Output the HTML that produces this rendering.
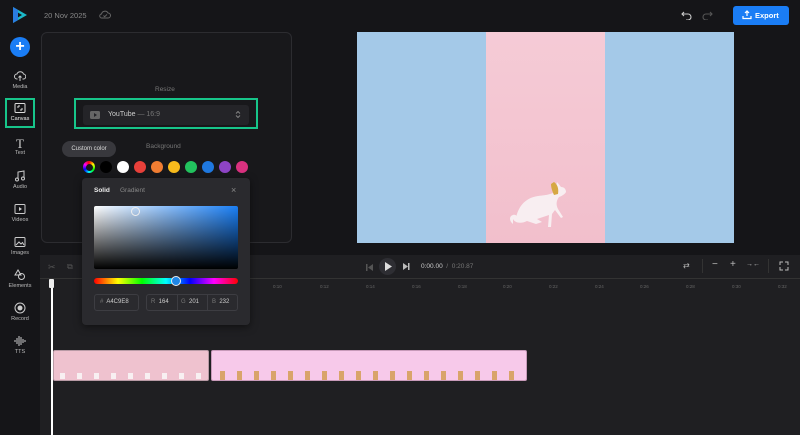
<!DOCTYPE html>
<html><head><meta charset="utf-8"><style>
*{margin:0;padding:0;box-sizing:border-box}
body{width:800px;height:435px;overflow:hidden;background:#151518;font-family:"Liberation Sans",sans-serif;color:#ccc;position:relative}
.a{position:absolute}
.side{left:0;top:0;width:40px;height:435px;background:#151518}
.nav{position:absolute;left:0;width:40px;text-align:center;font-size:5.5px;color:#bbb}
.nav svg{display:block;margin:0 auto 2px}
.sw{position:absolute;top:161px;width:12px;height:12px;border-radius:50%}
.in{position:absolute;top:294px;height:17px;border:1px solid #3d3d42;border-radius:3px;font-size:6px;color:#ccc;line-height:15px}
.tick{position:absolute;top:284px;font-size:4.5px;color:#666}
</style></head><body>
<div class="a side"></div>
<svg class="a" style="left:12px;top:6px" width="16" height="18" viewBox="0 0 16 18"><path d="M1 1 L15 9 L1 17 Z" fill="#1bb9c9"/><path d="M5 6 L10 9 L5 12Z" fill="#151518"/><path d="M1 1 L6 4 L6 14 L1 17Z" fill="#2a7de1"/></svg>
<div class="a" style="left:44px;top:11px;font-size:7.5px;color:#888">20 Nov 2025</div>
<svg class="a" style="left:99px;top:10px" width="12" height="10" viewBox="0 0 12 10"><path d="M3 8h6a2.5 2.5 0 0 0 0-5 3.5 3.5 0 0 0-6.5 1A2 2 0 0 0 3 8z" fill="none" stroke="#666" stroke-width="1"/><path d="M4.5 5.5l1.2 1.2 2.3-2.3" fill="none" stroke="#666" stroke-width="0.9"/></svg>
<svg class="a" style="left:681px;top:10px" width="12" height="10" viewBox="0 0 12 10"><path d="M3 2L1 4l2 2M1 4h6a3 3 0 0 1 0 6H5" fill="none" stroke="#ccc" stroke-width="1.1"/></svg>
<svg class="a" style="left:701px;top:10px" width="12" height="10" viewBox="0 0 12 10"><path d="M9 2l2 2-2 2M11 4H5a3 3 0 0 0 0 6h2" fill="none" stroke="#555" stroke-width="1.1"/></svg>
<div class="a" style="left:733px;top:6px;width:56px;height:19px;background:#1a7df5;border-radius:3px;color:#fff;font-size:7.5px;font-weight:bold;line-height:19px;padding-left:22px">Export</div>
<svg class="a" style="left:742px;top:10px" width="10" height="10" viewBox="0 0 10 10"><path d="M5 1v5M3 3l2-2 2 2M1 6v2.5h8V6" fill="none" stroke="#fff" stroke-width="1.2"/></svg>
<div class="a" style="left:10px;top:37px;width:20px;height:20px;border-radius:50%;background:#1a7df5;color:#fff;font-size:16px;line-height:19px;text-align:center;font-weight:bold">+</div>
<div class="nav" style="top:70px"><svg width="12" height="12" viewBox="0 0 12 12"><path d="M3.5 9H3a2.5 2.5 0 0 1 0-5 3.5 3.5 0 0 1 6.5 0A2.5 2.5 0 0 1 9 9h-.5M6 11V6M4.5 7.5L6 6l1.5 1.5" fill="none" stroke="#ccc" stroke-width="1"/></svg>Media</div>
<div class="a" style="left:5px;top:98px;width:30px;height:30px;border:2.5px solid #17c58a"></div>
<div class="nav" style="top:102px;color:#eee"><svg width="12" height="12" viewBox="0 0 12 12"><rect x="1" y="1.5" width="10" height="9" rx="1" fill="none" stroke="#ddd" stroke-width="1"/><path d="M4 4h2M4 4v2M8 8H6M8 8V6" stroke="#ddd" stroke-width="1"/></svg>Canvas</div>
<div class="nav" style="top:137px"><div style="font-family:'Liberation Serif',serif;font-size:13px;color:#ccc;line-height:13px">T</div>Text</div>
<div class="nav" style="top:170px"><svg width="12" height="12" viewBox="0 0 12 12"><path d="M4 9V2l6-1v7" fill="none" stroke="#ccc" stroke-width="1"/><circle cx="3" cy="9.5" r="1.5" fill="none" stroke="#ccc"/><circle cx="9" cy="8.5" r="1.5" fill="none" stroke="#ccc"/></svg>Audio</div>
<div class="nav" style="top:203px"><svg width="12" height="12" viewBox="0 0 12 12"><rect x="1" y="1.5" width="10" height="9" rx="1" fill="none" stroke="#ccc"/><path d="M5 4v4l3-2z" fill="#ccc"/></svg>Videos</div>
<div class="nav" style="top:236px"><svg width="12" height="12" viewBox="0 0 12 12"><rect x="1" y="1.5" width="10" height="9" rx="1" fill="none" stroke="#ccc"/><path d="M2 9l3-3 2 2 1.5-1.5L10 9" fill="none" stroke="#ccc"/></svg>Images</div>
<div class="nav" style="top:269px"><svg width="12" height="12" viewBox="0 0 12 12"><path d="M4 1L1 6h6z" fill="none" stroke="#ccc"/><circle cx="7.5" cy="7.5" r="3" fill="none" stroke="#ccc"/></svg>Elements</div>
<div class="nav" style="top:302px"><svg width="12" height="12" viewBox="0 0 12 12"><circle cx="6" cy="6" r="5" fill="none" stroke="#ccc"/><circle cx="6" cy="6" r="2.5" fill="#ccc"/></svg>Record</div>
<div class="nav" style="top:335px"><svg width="12" height="12" viewBox="0 0 12 12"><path d="M1 5v2M3 3v6M5 1v10M7 2v8M9 4v4M11 5v2" stroke="#ccc" stroke-width="1"/></svg>TTS</div>
<div class="a" style="left:41px;top:32px;width:251px;height:211px;border:1px solid #2c2c30;border-radius:6px;background:#18181b"></div>
<div class="a" style="left:155px;top:86px;font-size:6.5px;color:#777">Resize</div>
<div class="a" style="left:74px;top:98px;width:184px;height:31px;border:2.5px solid #17c58a"></div>
<div class="a" style="left:83px;top:105px;width:166px;height:20px;background:#242428;border-radius:3px"></div>
<svg class="a" style="left:90px;top:111px" width="10" height="8" viewBox="0 0 10 8"><rect width="10" height="8" rx="1.5" fill="#666"/><path d="M4 2v4l3-2z" fill="#242428"/></svg>
<div class="a" style="left:108px;top:111px;font-size:7px;color:#ccc">YouTube <span style="color:#777">— 16:9</span></div>
<svg class="a" style="left:235px;top:110px" width="6" height="9" viewBox="0 0 6 9"><path d="M1 3.5L3 1.5 5 3.5M1 5.5L3 7.5 5 5.5" fill="none" stroke="#888" stroke-width="0.9"/></svg>
<div class="a" style="left:146px;top:143px;font-size:6.5px;color:#777">Background</div>
<div class="a" style="left:62px;top:141px;width:54px;height:16px;background:#38383d;border-radius:8px;font-size:6px;color:#ddd;text-align:center;line-height:16px">Custom color</div>
<div class="sw" style="left:83px;background:conic-gradient(red,yellow,lime,cyan,blue,magenta,red)"><div style="margin:2.5px;width:7px;height:7px;border-radius:50%;background:#18181b"></div></div>
<div class="sw" style="left:100px;background:#000"></div>
<div class="sw" style="left:117px;background:#fff"></div>
<div class="sw" style="left:134px;background:#e8403a"></div>
<div class="sw" style="left:151px;background:#f07d32"></div>
<div class="sw" style="left:168px;background:#f8bb1c"></div>
<div class="sw" style="left:185px;background:#22c35e"></div>
<div class="sw" style="left:202px;background:#1f78e0"></div>
<div class="sw" style="left:219px;background:#8e44c6"></div>
<div class="sw" style="left:236px;background:#d9317f"></div>
<div class="a" style="left:357px;top:32px;width:377px;height:211px;background:#a4c9e8"></div>
<div class="a" style="left:486px;top:32px;width:119px;height:211px;background:linear-gradient(#f5cbd6,#f2bfcc)"></div>
<svg class="a" style="left:505px;top:164px" width="80" height="72" viewBox="0 0 80 72"><path d="M8 60c-4-3-4-8 0-9 3-1 5 2 3 3 2-10 8-20 22-22 10-1 13-2 17-4l2-10 4 5c3 0 5 2 5 5-1 2-4 4-7 5-3 4-3 8-1 12l5 8-2 1-6-8-3 4-1 13h-3l1-12-12 4 5 3-6 2-9-3c-6 3-12 2-14-2z" fill="#f8eef1"/><path d="M49 18c3 2 5 6 4 12l-4 1c-2-4-3-8-3-11z" fill="#d6a843"/></svg>
<div class="a" style="left:40px;top:255px;width:760px;height:180px;background:#1f1f22"></div>
<div class="a" style="left:40px;top:278px;width:760px;height:1px;background:#333"></div>
<div class="a" style="left:48px;top:262px;font-size:9px;color:#555">✂</div>
<div class="a" style="left:67px;top:262px;font-size:8px;color:#555">⧉</div>
<svg class="a" style="left:366px;top:264px" width="7" height="7"><path d="M7 0v7L2 3.5z M0 0h1.5v7H0z" fill="#555"/></svg>
<div class="a" style="left:379px;top:258px;width:17px;height:17px;border-radius:50%;background:#2e2e33"></div>
<svg class="a" style="left:384px;top:262px" width="8" height="9"><path d="M1 0v9l7-4.5z" fill="#ddd"/></svg>
<svg class="a" style="left:403px;top:263px" width="7" height="7"><path d="M0 0v7l5-3.5z M5 0h1.5v7H5z" fill="#bbb"/></svg>
<div class="a" style="left:421px;top:263px;font-size:6.5px;color:#ccc">0:00.00 <span style="color:#777">&nbsp;/&nbsp; 0:20.87</span></div>
<div class="a" style="left:683px;top:261px;font-size:8px;color:#bbb">⇄</div>
<div class="a" style="left:702px;top:259px;width:1px;height:14px;background:#333"></div>
<div class="a" style="left:712px;top:259px;font-size:10px;color:#bbb">−</div>
<div class="a" style="left:730px;top:259px;font-size:10px;color:#bbb">+</div>
<div class="a" style="left:746px;top:261px;font-size:7px;color:#bbb">→←</div>
<div class="a" style="left:768px;top:259px;width:1px;height:14px;background:#333"></div>
<svg class="a" style="left:779px;top:261px" width="10" height="10"><path d="M1 4V1h3M6 1h3v3M9 6v3H6M4 9H1V6" fill="none" stroke="#bbb"/></svg>
<div class="tick" style="left:273px">0:10</div><div class="tick" style="left:320px">0:12</div><div class="tick" style="left:366px">0:14</div><div class="tick" style="left:412px">0:16</div><div class="tick" style="left:458px">0:18</div><div class="tick" style="left:503px">0:20</div><div class="tick" style="left:549px">0:22</div><div class="tick" style="left:595px">0:24</div><div class="tick" style="left:640px">0:26</div><div class="tick" style="left:686px">0:28</div><div class="tick" style="left:732px">0:30</div><div class="tick" style="left:778px">0:32</div>
<div class="a" style="left:53px;top:350px;width:156px;height:31px;border-radius:2px;border:1px solid #b89aa5;background:#efc2cf repeating-linear-gradient(90deg,transparent 0 6px,#f8f0f2 6px 11px,transparent 11px 17px) 0 22px/17px 6px repeat-x"></div>
<div class="a" style="left:211px;top:350px;width:316px;height:31px;border-radius:2px;border:1px solid #c79ab9;background:#f7c9ea repeating-linear-gradient(90deg,transparent 0 8px,#d9a46a 8px 13px,transparent 13px 17px) 0 20px/17px 9px repeat-x"></div>
<div class="a" style="left:51px;top:285px;width:1.5px;height:150px;background:#fff"></div>
<div class="a" style="left:49px;top:279px;width:5px;height:9px;background:#eee;border-radius:1px"></div>
<div class="a" style="left:82px;top:178px;width:168px;height:147px;background:#2a2a2e;border-radius:4px;box-shadow:0 2px 8px rgba(0,0,0,.5)"></div>
<div class="a" style="left:94px;top:187px;font-size:6.5px;color:#eee;font-weight:bold">Solid</div>
<div class="a" style="left:120px;top:187px;font-size:6.5px;color:#888">Gradient</div>
<div class="a" style="left:231px;top:185px;font-size:9px;color:#888">×</div>
<div class="a" style="left:94px;top:206px;width:144px;height:63px;border-radius:2px;background:linear-gradient(to top,#000,transparent),linear-gradient(to right,#fff,#1a7ff5)"></div>
<div class="a" style="left:131px;top:207px;width:9px;height:9px;border-radius:50%;border:1.5px solid #eee"></div>
<div class="a" style="left:94px;top:278px;width:144px;height:6px;border-radius:3px;background:linear-gradient(to right,red,yellow,lime,cyan,blue,magenta,red)"></div>
<div class="a" style="left:171px;top:276px;width:10px;height:10px;border-radius:50%;border:1.5px solid #eee;background:#1f86e6"></div>
<div class="in" style="left:94px;width:45px;padding-left:5px"><span style="color:#777">#</span>&nbsp; A4C9E8</div>
<div class="in" style="left:146px;width:92px"></div>
<div class="a" style="left:177px;top:295px;width:1px;height:15px;background:#3d3d42"></div>
<div class="a" style="left:207px;top:295px;width:1px;height:15px;background:#3d3d42"></div>
<div class="a" style="left:151px;top:299px;font-size:6px;color:#ccc"><span style="color:#777">R</span>&nbsp; 164</div>
<div class="a" style="left:181px;top:299px;font-size:6px;color:#ccc"><span style="color:#777">G</span>&nbsp; 201</div>
<div class="a" style="left:212px;top:299px;font-size:6px;color:#ccc"><span style="color:#777">B</span>&nbsp; 232</div>
</body></html>
